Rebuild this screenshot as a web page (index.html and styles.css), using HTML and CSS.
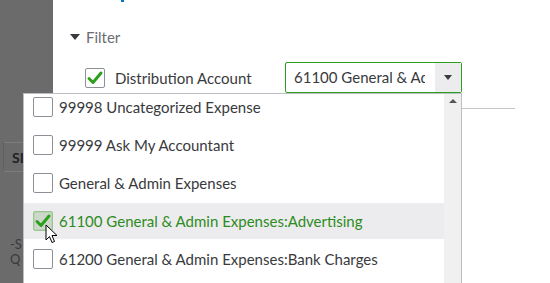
FILE: index.html
```html
<!DOCTYPE html>
<html lang="en">

<head>
    <meta charset="UTF-8">
    <meta name="viewport" content="width=device-width, initial-scale=1.0">
    <title>Filter</title>
    <link rel="stylesheet" href="styles.css">
</head>

<body>
    <div class="page">
        <div class="side">
            <div class="side-head"><span class="side-title">SI</span></div>
            <div class="side-row">-S</div>
            <div class="side-row">Q</div>
        </div>

        <div class="main">
            <div class="title-tail"></div>
            <div class="filter-toggle">
                <span class="caret"></span>
                <span>Filter</span>
            </div>
            <div class="filter-row">
                <span class="box checked">
                    <svg viewBox="0 0 20 20" width="20" height="20"><path d="M4 10.5 L8 14.5 L16 5" fill="none" stroke="#2ca01c" stroke-width="3" stroke-linecap="round" stroke-linejoin="round"/></svg>
                </span>
                <span class="filter-label">Distribution Account</span>
                <div class="select">
                    <span class="select-value">61100 General &amp; Admin Expenses:Advertising</span>
                    <span class="select-btn"><span class="tri-down"></span></span>
                </div>
            </div>
            <div class="divider"></div>
        </div>
    </div>

    <div class="menu">
        <div class="menu-items">
            <div class="item">
                <span class="box"></span>
                <span>99998 Uncategorized Expense</span>
            </div>
            <div class="item">
                <span class="box"></span>
                <span>99999 Ask My Accountant</span>
            </div>
            <div class="item">
                <span class="box"></span>
                <span>General &amp; Admin Expenses</span>
            </div>
            <div class="item active">
                <span class="box checked hover">
                    <svg viewBox="0 0 20 20" width="20" height="20"><path d="M4 10.5 L8 14.5 L16 5" fill="none" stroke="#2ca01c" stroke-width="3" stroke-linecap="round" stroke-linejoin="round"/></svg>
                </span>
                <span>61100 General &amp; Admin Expenses:Advertising</span>
                <svg class="pointer" viewBox="0 0 13 20" width="13" height="20"><path d="M1 1 L1 16 L4.5 12.5 L7 18.5 L9.5 17.5 L7 11.5 L12 11.5 Z" fill="#fff" stroke="#000" stroke-width="1" stroke-linejoin="round"/></svg>
            </div>
            <div class="item">
                <span class="box"></span>
                <span>61200 General &amp; Admin Expenses:Bank Charges</span>
            </div>
        </div>
        <div class="scrollbar">
            <span class="tri-up"></span>
        </div>
    </div>
</body>

</html>
```

FILE: styles.css
```css
body {
    margin: 0;
    width: 550px;
    height: 283px;
    overflow: hidden;
    position: relative;
    font-family: 'Lato', 'Liberation Sans', sans-serif;
    font-size: 15px;
    color: #393a3d;
    background-color: #fff;
}

.page {
    display: flex;
    height: 283px;
}

/* dimmed page behind the panel */
.side {
    width: 53px;
    flex-shrink: 0;
    background-color: #6b6b6b;
    padding-top: 142px;
    box-sizing: border-box;
}

.side-head {
    height: 28px;
    border-top: 1px solid #7d7d7d;
    border-bottom: 1px solid #7d7d7d;
    border-left: 1px dotted #555;
    margin-left: 3px;
    display: flex;
    align-items: center;
    padding-left: 8px;
}

.side-title {
    font-weight: bold;
    font-size: 14px;
    color: #222;
}

.side-row {
    font-size: 13px;
    line-height: 15px;
    color: #3a3a3a;
    padding-left: 10px;
}

.side-row:nth-child(2) {
    margin-top: 65px;
}

.main {
    flex: 1;
    position: relative;
}

.title-tail {
    width: 3px;
    height: 2px;
    margin-left: 68px;
    background-color: #0077c5;
}

.filter-toggle {
    display: flex;
    align-items: center;
    margin-top: 26px;
    margin-left: 17px;
    color: #6b6c72;
    height: 18px;
}

.caret {
    width: 0;
    height: 0;
    border-left: 5px solid transparent;
    border-right: 5px solid transparent;
    border-top: 6px solid #393a3d;
    margin-right: 6px;
}

.filter-row {
    display: flex;
    align-items: center;
    margin-top: 16px;
    margin-left: 32px;
    height: 31px;
}

.box {
    width: 18px;
    height: 18px;
    border: 1px solid #8d9096;
    border-radius: 2px;
    background-color: #fff;
    flex-shrink: 0;
    display: flex;
    align-items: center;
    justify-content: center;
}

.box svg {
    flex-shrink: 0;
}

.box.hover {
    background-color: #cdd7ca;
    border-color: #9cc494;
    box-shadow: inset 0 0 0 1px #b7d3b1;
}

.filter-label {
    margin-left: 10px;
    width: 170px;
}

.select {
    display: flex;
    width: 175px;
    height: 29px;
    border: 1px solid #2ca01c;
    border-radius: 2px;
}

.select-value {
    flex: 1;
    overflow: hidden;
    white-space: nowrap;
    padding-left: 8px;
    line-height: 29px;
    margin-right: 10px;
}

.select-btn {
    width: 26px;
    background-color: #ececee;
    display: flex;
    align-items: center;
    justify-content: center;
}

.tri-down {
    width: 0;
    height: 0;
    border-left: 4px solid transparent;
    border-right: 4px solid transparent;
    border-top: 5px solid #393a3d;
}

.divider {
    margin-top: 15px;
    margin-left: 40px;
    width: 422px;
    border-top: 1px solid #c4c6ca;
}

/* open dropdown list */
.menu {
    position: absolute;
    left: 23px;
    top: 93px;
    width: 437px;
    height: 200px;
    display: flex;
    border: 1px solid #babec5;
    background-color: #fff;
    overflow: hidden;
}

.menu-items {
    flex: 1;
    margin-top: -5px;
}

.item {
    position: relative;
    display: flex;
    align-items: center;
    height: 36px;
    margin-bottom: 2px;
    padding-left: 9px;
    white-space: nowrap;
}

.item .box {
    margin-right: 6px;
}

.item.active {
    background-color: #ececee;
    color: #2e8b22;
}

.pointer {
    position: absolute;
    left: 21px;
    top: 21px;
}

.scrollbar {
    width: 17px;
    background-color: #f0f0f0;
    display: flex;
    justify-content: center;
    padding-top: 5px;
}

.tri-up {
    width: 0;
    height: 0;
    border-left: 4px solid transparent;
    border-right: 4px solid transparent;
    border-bottom: 4px solid #555;
}
```
